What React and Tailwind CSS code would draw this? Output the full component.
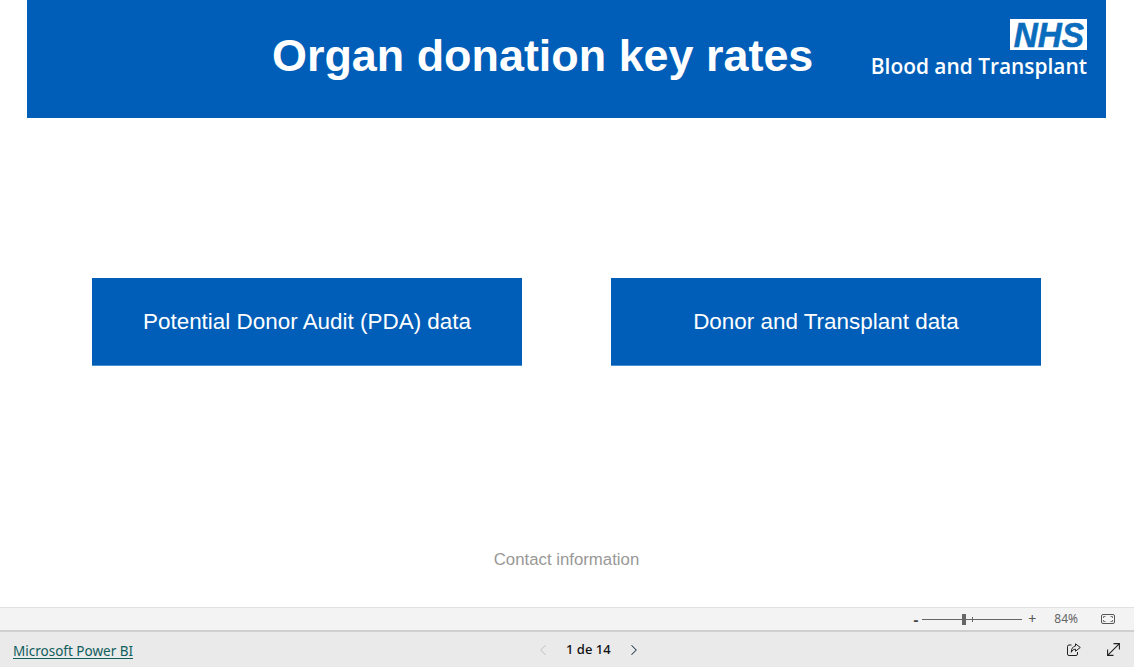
import React from "react";
import { ChevronLeft, ChevronRight } from "lucide-react";

const arial = "font-['Liberation_Sans',Arial,sans-serif]";
const ui = "font-['Noto_Sans','Open_Sans',sans-serif]";

function ShareIcon() {
  return (
    <svg width="14" height="13" viewBox="0 0 14 13" fill="none" stroke="#222" strokeWidth="1">
      <path d="M4.500 2H2A1.500 1.500 0 0 0 .5 3.500v7.500A1.500 1.500 0 0 0 2 12.500h7a1.500 1.500 0 0 0 1.500-1.500V9" />
      <path d="M8.500.8 13.300 4.500 8.500 8.200V6.200C6.500 6.200 5 7.300 4.300 9.300 4.300 5.800 5.800 3.300 8.500 3Z" />
    </svg>
  );
}

function ExpandIcon() {
  return (
    <svg width="13" height="13" viewBox="0 0 13 13" fill="none" stroke="#222" strokeWidth="1.100">
      <path d="M.6 12.400 12.400 .6M6.500 .6H12.400V6.500M.6 6.500V12.400H6.500" />
    </svg>
  );
}

function FitIcon() {
  return (
    <svg width="14" height="10" viewBox="0 0 14 10" fill="none" stroke="#555" strokeWidth="1">
      <rect x="0.500" y="0.500" width="13" height="9" rx="1.500" />
      <path d="M2.500 4V2.500H4.500M11.500 4V2.500H9.500M2.500 6V7.500H4.500M11.500 6V7.500H9.500" strokeWidth="0.800" />
    </svg>
  );
}

export default function App() {
  return (
    <div className={`h-[667px] w-[1134px] flex flex-col overflow-hidden bg-white ${arial}`}>
      <main className="h-[607px] flex flex-col">
        <header className="ml-[27px] mr-[28px] h-[118px] bg-[#005eb8] flex items-start relative">
          <h1 className="w-full pl-[245px] pt-[29px] text-[44.900px] leading-[54px] font-bold text-white">
            Organ donation key rates
          </h1>
          <div className="absolute right-[19px] top-[19px] flex flex-col items-end">
            <div className="w-[77px] h-[31px] bg-white flex items-center justify-center">
              <span className={`${arial} italic font-bold text-[35px] leading-[31px] scale-x-[0.95] text-[#0a6cbc] [-webkit-text-stroke:0.6px_#0a6cbc]`}>NHS</span>
            </div>
            <span className="mt-[2px] font-['Open_Sans',sans-serif] font-semibold text-[20.900px] leading-[28px] text-white whitespace-nowrap">
              Blood and Transplant
            </span>
          </div>
        </header>
        <div className="mt-[160px] flex pl-[92px] gap-[89px]">
          <button className="w-[430px] h-[88px] bg-[#005eb8] border-b border-[#4a8fd0] text-white text-[22.450px]">Potential Donor Audit (PDA) data</button>
          <button className="w-[430px] h-[88px] bg-[#005eb8] border-b border-[#4a8fd0] text-white text-[22.450px]">Donor and Transplant data</button>
        </div>
        <p className="mt-[184px] pr-[1px] text-center text-[16.800px] leading-[20px] text-[#999896]">Contact information</p>
      </main>
      <div className={`h-[23px] bg-[#f3f3f3] border-t border-[#e0e0e0] flex items-center justify-end pr-[19px] ${ui}`}>
        <span className="text-[15px] leading-none text-[#444] font-bold mr-[4px]">-</span>
        <div className="w-[100px] h-[1px] bg-[#666] relative mr-[6px]">
          <div className="absolute left-[40px] top-[-5px] w-[4px] h-[11px] bg-[#666]" />
          <div className="absolute left-[50px] top-[-2px] w-[1px] h-[5px] bg-[#666]" />
        </div>
        <span className="text-[14px] leading-none text-[#555] mr-[18px]">+</span>
        <span className="text-[12px] leading-none text-[#666] mr-[23px]">84%</span>
        <FitIcon />
      </div>
      <footer className={`h-[37px] bg-[#eaeaea] border-t-2 border-[#cfcfcf] flex items-center relative ${ui}`}>
        <a className="ml-[13px] mt-[5px] text-[13.500px] leading-none text-[#0f5d5d] underline underline-offset-2">Microsoft Power BI</a>
        <div className="absolute left-[534px] flex items-center">
          <ChevronLeft size={18} strokeWidth={1.400} className="text-[#c4c4c4]" />
          <span className="ml-[14px] mr-[15px] text-[13px] font-medium text-[#111] w-[44px] whitespace-nowrap">1 de 14</span>
          <ChevronRight size={18} strokeWidth={1.400} className="text-[#1f3a4d]" />
        </div>
        <div className="ml-auto flex items-center mr-[14px] gap-[26px]">
          <ShareIcon />
          <ExpandIcon />
        </div>
      </footer>
    </div>
  );
}
